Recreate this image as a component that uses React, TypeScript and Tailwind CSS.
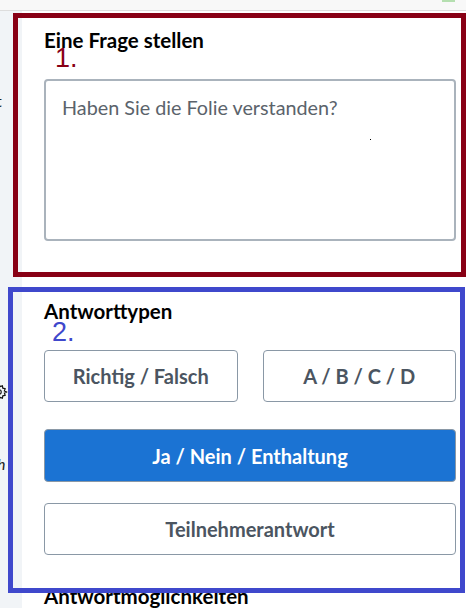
import React from "react";

const annoFont = { fontFamily: '"Liberation Sans", sans-serif' };

function OptionButton({ label, active }: { label: string; active?: boolean }) {
  return (
    <button
      className={
        active
          ? "shrink-0 h-[53px] w-full border border-[#8a98a6] rounded-[4px] bg-[#1b73d3] text-[20px] font-bold text-white"
          : "shrink-0 h-[52px] w-full border border-[#8a98a6] rounded-[4px] bg-white text-[20px] font-bold text-[#4b5561]"
      }
    >
      {label}
    </button>
  );
}

export default function App() {
  return (
    <div
      className="relative w-[466px] h-[608px] overflow-hidden bg-white"
      style={{ fontFamily: '"Lato", "Noto Sans", sans-serif' }}
    >
      <div className="h-[11px] bg-[#f8f8f8] border-b border-[#dddddd] flex justify-end pr-[11px]">
        <div className="w-[13px] h-[2px] bg-[#b5dfb0]" />
      </div>
      <div className="flex h-[597px] overflow-hidden">
        <div className="w-[22px] shrink-0 bg-[#f1f4f7] overflow-hidden flex flex-col text-[16px] text-[#222]">
          <div className="shrink-0 mt-[78px] -ml-[4px] leading-[24px]">t</div>
          <div className="shrink-0 mt-[270px] -ml-[10px]">
            <svg width="18" height="18" viewBox="0 0 24 24" fill="none" stroke="#111" strokeWidth="1.6">
              <circle cx="12" cy="12" r="3" />
              <path d="M12 2l1.5 2.8 3-1 .6 3.1 3.1.6-1 3L22 12l-2.8 1.5 1 3-3.1.6-.6 3.1-3-1L12 22l-1.5-2.8-3 1-.6-3.1-3.1-.6 1-3L2 12l2.8-1.5-1-3 3.1-.6.6-3.1 3 1z" />
            </svg>
          </div>
          <div className="shrink-0 mt-[51px] -ml-[3px] italic leading-[24px]">h</div>
        </div>
        <div className="flex-1 flex flex-col pl-[22px] pr-[10px] pt-[17px]">
          <div className="shrink-0 text-[20.5px] font-bold text-black leading-[24px]">Eine Frage stellen</div>
          <div className="shrink-0 mt-[27px] h-[162px] border-2 border-[#aab3bc] rounded-[4px] px-[16px] pt-[12px] text-[19.8px] text-[#5b636b] relative">
            Haben Sie die Folie verstanden?
            <div className="absolute left-[324px] top-[58px] w-[1px] h-[1px] bg-black" />
          </div>
          <div className="shrink-0 mt-[58px] text-[20.5px] font-bold text-black leading-[24px]">Antworttypen</div>
          <div className="shrink-0 mt-[27px] flex flex-col gap-[27px]">
            <div className="grid grid-cols-2 gap-[25px]">
              <OptionButton label="Richtig / Falsch" />
              <OptionButton label="A / B / C / D" />
            </div>
            <div className="flex flex-col gap-[21px]">
              <OptionButton label="Ja / Nein / Enthaltung" active />
              <OptionButton label="Teilnehmerantwort" />
            </div>
          </div>
          <div className="shrink-0 mt-[29px] text-[20.5px] font-bold text-black leading-[24px]">Antwortmöglichkeiten</div>
        </div>
      </div>
      <div className="absolute left-[13px] top-[13px] w-[453px] h-[264px] border-[5px] border-[#880015] pointer-events-none" />
      <div className="absolute left-[55px] top-[42px] text-[27px] leading-[32px] text-[#880015]" style={annoFont}>1.</div>
      <div className="absolute left-[8px] top-[287px] w-[457px] h-[306px] border-[5px] border-[#3f48cc] pointer-events-none" />
      <div className="absolute left-[52px] top-[316px] text-[27px] leading-[32px] text-[#3f48cc]" style={annoFont}>2.</div>
    </div>
  );
}
